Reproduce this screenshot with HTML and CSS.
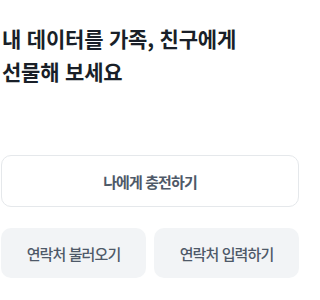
FILE: index.html
```html
<!DOCTYPE html>
<html lang="ko">
<head>
<meta charset="utf-8">
<link rel="stylesheet" href="styles.css">
</head>
<body>
<main class="page">
  <h1 class="title">내 데이터를 가족, 친구에게<br>선물해 보세요</h1>
  <button class="btn btn-outline">나에게 충전하기</button>
  <div class="row">
    <button class="btn btn-fill">연락처 불러오기</button>
    <button class="btn btn-fill">연락처 입력하기</button>
  </div>
</main>
</body>
</html>
```
FILE: styles.css
```css
html, body {
  margin: 0;
  padding: 0;
  background: #ffffff;
}
.page {
  width: 298px;
  padding: 0 1px;
  font-family: "Noto Sans CJK KR", "Noto Sans", sans-serif;
}
.title {
  margin: 0;
  padding: 22px 0 0 1px;
  font-size: 21px;
  line-height: 33px;
  font-weight: 700;
  color: #191f28;
  letter-spacing: -0.2px;
}
.btn {
  display: flex;
  align-items: center;
  justify-content: center;
  font-family: inherit;
  font-size: 15px;
  letter-spacing: -0.9px;
  border-radius: 10px;
  cursor: pointer;
}
.btn-outline {
  margin-top: 67px;
  width: 100%;
  height: 52px;
  font-weight: 600;
  color: #4e5968;
  background: #ffffff;
  border: 1px solid #e5e8eb;
}
.row {
  display: flex;
  gap: 8px;
  margin-top: 21px;
}
.btn-fill {
  flex: 1;
  height: 50px;
  font-weight: 500;
  color: #4e5968;
  background: #f2f4f6;
  border: none;
}
```
